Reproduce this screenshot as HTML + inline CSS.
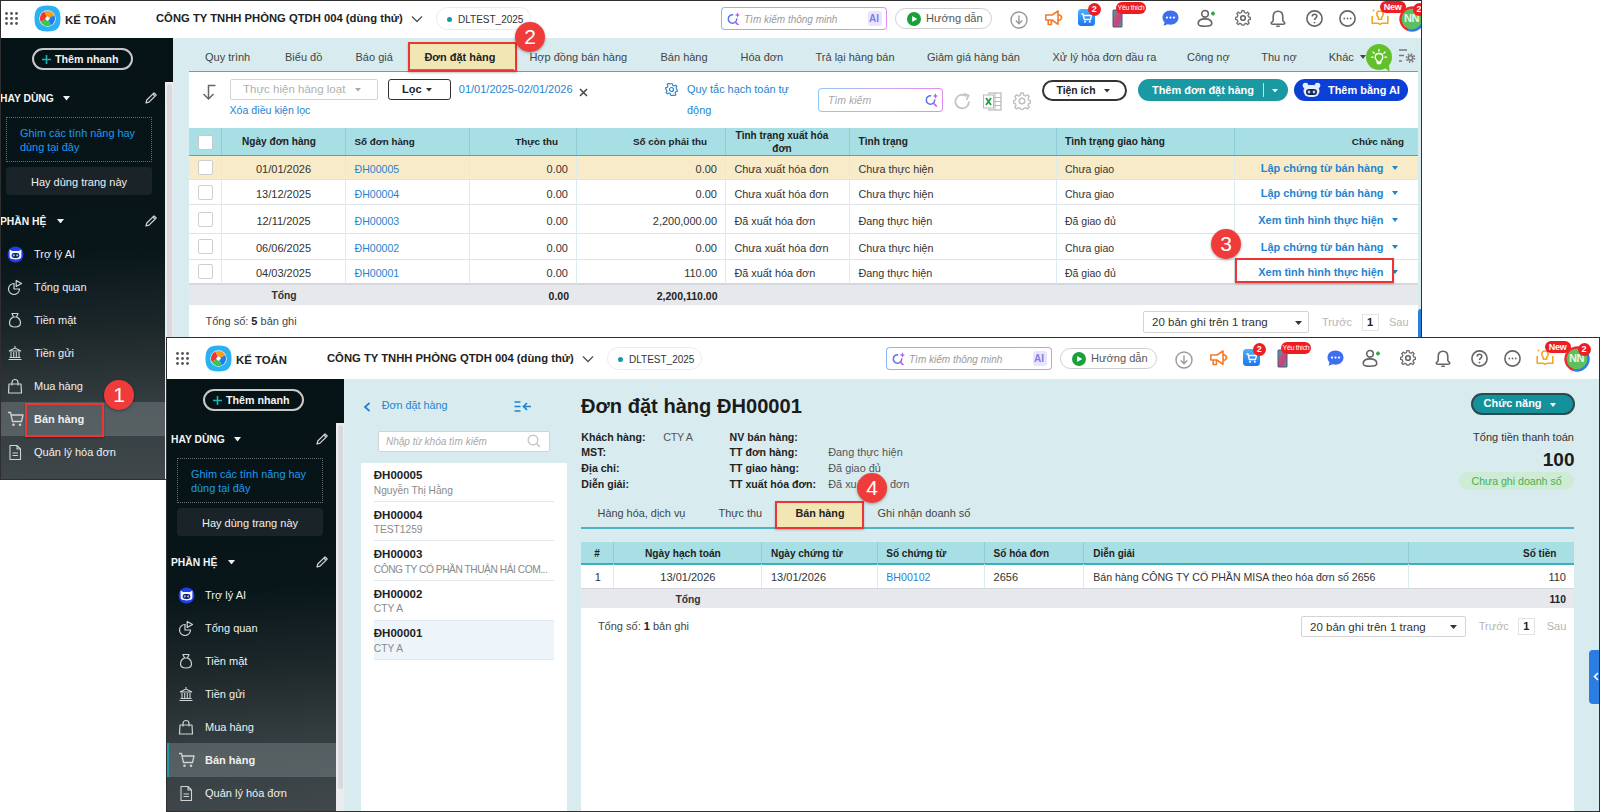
<!DOCTYPE html><html><head><meta charset="utf-8"><style>
html,body{margin:0;padding:0;}
body{width:1600px;height:812px;position:relative;overflow:hidden;background:#fff;font-family:"Liberation Sans",sans-serif;}
.t{position:absolute;white-space:nowrap;}
.r{position:absolute;}
.win{position:absolute;left:0;top:0;width:1600px;height:812px;}
</style></head><body>
<div class="win" style="clip-path:inset(0px 178px 332px 0px);">
<div class="r" style="left:0px;top:0px;width:1422px;height:480px;background:#fff;"></div>
<svg class="r" style="left:5px;top:12px" width="14" height="14" viewBox="0 0 14 14"><circle cx="1.5" cy="1.5" r="1.4" fill="#555"/><circle cx="1.5" cy="6.5" r="1.4" fill="#555"/><circle cx="1.5" cy="11.5" r="1.4" fill="#555"/><circle cx="6.5" cy="1.5" r="1.4" fill="#555"/><circle cx="6.5" cy="6.5" r="1.4" fill="#555"/><circle cx="6.5" cy="11.5" r="1.4" fill="#555"/><circle cx="11.5" cy="1.5" r="1.4" fill="#555"/><circle cx="11.5" cy="6.5" r="1.4" fill="#555"/><circle cx="11.5" cy="11.5" r="1.4" fill="#555"/></svg>
<svg class="r" style="left:34px;top:5px" width="27" height="27" viewBox="0 0 27 27"><path d="M13.5 0.5 C23 0.5 26.5 4 26.5 13.5 C26.5 23 23 26.5 13.5 26.5 C4 26.5 0.5 23 0.5 13.5 C0.5 4 4 0.5 13.5 0.5 Z" fill="#2ab2f0"/><circle cx="13.5" cy="13.5" r="8.3" fill="#e8f7ff"/><path d="M13.5 13.5 L10.29 6.61 A7.6 7.6 0 0 1 20.39 10.29 Z" fill="#ff9a12"/><path d="M13.5 13.5 L20.39 10.29 A7.6 7.6 0 0 1 16.71 20.39 Z" fill="#1f7bf2"/><path d="M13.5 13.5 L16.71 20.39 A7.6 7.6 0 0 1 6.61 16.71 Z" fill="#39c94a"/><path d="M13.5 13.5 L6.61 16.71 A7.6 7.6 0 0 1 10.29 6.61 Z" fill="#f2372f"/><rect x="11.7" y="11.7" width="3.6" height="3.6" fill="#fff" transform="rotate(45 13.5 13.5)"/></svg>
<div class="t" style="left:65px;top:12.00px;font-size:11.4px;line-height:16px;color:#222;font-weight:700;">KẾ TOÁN</div>
<div class="t" style="left:156px;top:10.20px;font-size:11.26px;line-height:16px;color:#222;font-weight:700;">CÔNG TY TNHH PHÒNG QTDH 004 (dùng thử)</div>
<svg class="r" style="left:411px;top:15px" width="12" height="8" viewBox="0 0 12 8"><path d="M1 1.5 L6 6.5 L11 1.5" fill="none" stroke="#555" stroke-width="1.4"/></svg>
<div class="r" style="left:436px;top:7px;width:95px;height:23px;border:1px solid #ececec;border-radius:12px;box-sizing:border-box;"></div>
<div class="r" style="left:447px;top:16.5px;width:5px;height:5px;background:#149aa8;border-radius:50%;"></div>
<div class="t" style="left:458px;top:12.80px;font-size:10px;line-height:14px;color:#333;letter-spacing:0px;">DLTEST_2025</div>
<div class="r" style="left:721px;top:7px;width:166px;height:23px;border-radius:4px;background:linear-gradient(90deg,#8db4f7,#c49af5 60%,#e58cf0);"></div>
<div class="r" style="left:722px;top:8px;width:164px;height:21px;border-radius:3px;background:#fff;"></div>
<svg class="r" style="left:727px;top:12px" width="13" height="13" viewBox="0 0 13 13"><path d="M9.64 6.27 A4.2 4.2 0 1 1 6.23 2.86" fill="none" stroke="#5a73ee" stroke-width="1.5"/><path d="M8.3 10 L11.3 13" stroke="#c05ae8" stroke-width="1.7" stroke-linecap="round"/><path d="M10.5 0.3 L11.3 2.2 L13.2 3 L11.3 3.8 L10.5 5.7 L9.7 3.8 L7.8 3 L9.7 2.2 Z" fill="#b35ae8"/></svg>
<div class="t" style="left:744px;top:13.00px;font-size:10px;line-height:14px;color:#9a9a9a;font-style:italic;">Tìm kiếm thông minh</div>
<div class="r" style="left:868px;top:11px;width:14px;height:15px;border-radius:3px;background:#e9e6fb;"></div>
<div class="t" style="left:869px;top:11.50px;font-size:10px;line-height:14px;color:#7d7cf0;font-weight:700;letter-spacing:0px;">AI</div>
<div class="r" style="left:895px;top:8px;width:97px;height:21px;border:1px solid #cfcfcf;border-radius:11px;box-sizing:border-box;"></div>
<svg class="r" style="left:906.5px;top:11.8px" width="14" height="14" viewBox="0 0 14 14"><circle cx="7" cy="7" r="7" fill="#1aa03a"/><path d="M5.2 4 L10.2 7 L5.2 10 Z" fill="#fff"/></svg>
<div class="t" style="left:926px;top:9.60px;font-size:11.1px;line-height:16px;color:#555;">Hướng dẫn</div>
<svg class="r" style="left:1010px;top:11px" width="18" height="18" viewBox="0 0 18 18"><circle cx="9" cy="9" r="8" fill="none" stroke="#9a9a9a" stroke-width="1.4"/><path d="M9 4.5 L9 12.5 M5.8 9.5 L9 12.7 L12.2 9.5" fill="none" stroke="#9a9a9a" stroke-width="1.4"/></svg>
<svg class="r" style="left:1045px;top:10px" width="18" height="16" viewBox="0 0 18 16"><path d="M0.8 5 L7 5 L13 1 L13 14.3 L7 10 L0.8 10 Z M13 4.5 C15.5 5 16.6 6.3 16.6 7.6 C16.6 9 15.5 10.2 13 10.8 M3.2 10 L3.2 14.5 L6.4 14.5 L6.4 10" fill="none" stroke="#f47b2a" stroke-width="1.6" stroke-linejoin="round"/></svg>
<svg class="r" style="left:1078px;top:8.5px" width="17" height="17" viewBox="0 0 17 17"><defs><linearGradient id="cg" x1="0" y1="0" x2="0" y2="1"><stop offset="0" stop-color="#4fb0fa"/><stop offset="1" stop-color="#1d74ee"/></linearGradient></defs><rect width="17" height="17" rx="3.5" fill="url(#cg)"/><path d="M3.5 5 L5 5 L6.3 10.5 L12.5 10.5 L13.5 6.5 L5.8 6.5" fill="none" stroke="#fff" stroke-width="1.3"/><circle cx="7" cy="12.8" r="1" fill="#fff"/><circle cx="11.8" cy="12.8" r="1" fill="#fff"/></svg>
<div class="r" style="left:1087.5px;top:2.5px;width:13.5px;height:13.5px;border-radius:50%;background:#ee1d24;"></div>
<div class="t" style="left:1087.3px;top:3.00px;font-size:9px;line-height:13px;color:#fff;font-weight:700;width:14px;text-align:center;">2</div>
<svg class="r" style="left:1112px;top:9px" width="11" height="19" viewBox="0 0 11 19"><defs><linearGradient id="pg" x1="0" y1="0" x2="1" y2="1"><stop offset="0" stop-color="#3aa6b0"/><stop offset="0.45" stop-color="#d0457a"/><stop offset="0.7" stop-color="#b84a8a"/><stop offset="1" stop-color="#2fb0a0"/></linearGradient></defs><rect x="0.5" y="0.5" width="10" height="18" rx="1.5" fill="#4b5a6a"/><rect x="1.5" y="1.5" width="8" height="16" rx="1" fill="url(#pg)"/></svg>
<div class="r" style="left:1116px;top:1.5px;width:30px;height:12px;border-radius:6px;background:#ee1d24;"></div>
<div class="t" style="left:1116.0px;top:2.50px;font-size:7px;line-height:10px;color:#fff;letter-spacing:-0.3px;width:30px;text-align:center;">Yêu thích</div>
<svg class="r" style="left:1161.5px;top:10px" width="17" height="16" viewBox="0 0 17 16"><path d="M8.5 0.5 C13.2 0.5 16.5 3.6 16.5 7.6 C16.5 11.6 13.2 14.7 8.5 14.7 C7.5 14.7 6.6 14.6 5.7 14.3 L1.5 15.8 L2.6 12.4 C1.3 11.1 0.5 9.5 0.5 7.6 C0.5 3.6 3.8 0.5 8.5 0.5 Z" fill="#3d6ff0"/><circle cx="5" cy="7.6" r="1.1" fill="#fff"/><circle cx="8.5" cy="7.6" r="1.1" fill="#fff"/><circle cx="12" cy="7.6" r="1.1" fill="#fff"/></svg>
<svg class="r" style="left:1197px;top:9px" width="20" height="19" viewBox="0 0 20 19"><circle cx="8" cy="4.8" r="3.3" fill="none" stroke="#666" stroke-width="1.6"/><path d="M1.2 14.6 C1.2 11.6 4.2 9.9 8 9.9 C11.8 9.9 14.8 11.6 14.8 14.6 C14.8 16.9 12.2 17.3 8 17.3 C3.8 17.3 1.2 16.9 1.2 14.6 Z" fill="none" stroke="#666" stroke-width="1.6"/><path d="M16 2.5 L16 6.5 M14 4.5 L18 4.5" stroke="#28a745" stroke-width="1.8"/></svg>
<svg class="r" style="left:1235px;top:10px" width="16" height="16" viewBox="0 0 16 16"><path d="M8 0.8 L9.6 0.8 L10 3 L11.8 3.8 L13.6 2.5 L14.8 3.7 L13.5 5.6 L14.2 7.3 L16.3 7.8 L16.3 9.4" fill="none"/><circle cx="8" cy="8" r="2.3" fill="none" stroke="#666" stroke-width="1.6"/><path d="M6.9 1 L9.1 1 L9.5 3 L11.2 3.8 L12.9 2.6 L14.4 4.1 L13.2 5.8 L13.9 7.5 L15.7 7.9 L15.7 10.1 L13.9 10.5 L13.2 12.2 L14.4 13.9 L12.9 15.4 L11.2 14.2 L9.5 15 L9.1 16 L6.9 16 L6.5 14.9 L4.8 14.2 L3.1 15.4 L1.6 13.9 L2.8 12.2 L2.1 10.5 L0.4 10.1 L0.4 7.9 L2.1 7.5 L2.8 5.8 L1.6 4.1 L3.1 2.6 L4.8 3.8 L6.5 3 Z" fill="none" stroke="#6b6b6b" stroke-width="1.3" stroke-linejoin="round" transform="scale(0.97) translate(0.2,-0.4)"/></svg>
<svg class="r" style="left:1270px;top:9.5px" width="16" height="18" viewBox="0 0 16 18"><path d="M8 1.2 C4.9 1.2 3.2 3.6 3.2 6.8 L3.2 10.2 C3.2 11.6 1.2 12 1.2 13.3 C1.2 14.1 2 14.3 3 14.3 L13 14.3 C14 14.3 14.8 14.1 14.8 13.3 C14.8 12 12.8 11.6 12.8 10.2 L12.8 6.8 C12.8 3.6 11.1 1.2 8 1.2 Z" fill="none" stroke="#666" stroke-width="1.6"/><path d="M6.8 16.3 L9.2 16.3" stroke="#6b6b6b" stroke-width="1.6" stroke-linecap="round"/></svg>
<svg class="r" style="left:1306px;top:10px" width="17" height="17" viewBox="0 0 17 17"><circle cx="8.5" cy="8.5" r="7.6" fill="none" stroke="#666" stroke-width="1.6"/><path d="M6.2 6.5 C6.2 4.9 7.3 4.2 8.5 4.2 C9.8 4.2 10.8 5 10.8 6.3 C10.8 8 8.5 8.2 8.5 10" fill="none" stroke="#666" stroke-width="1.6"/><circle cx="8.5" cy="12.6" r="0.9" fill="#6b6b6b"/></svg>
<svg class="r" style="left:1339px;top:10px" width="17" height="17" viewBox="0 0 17 17"><circle cx="8.5" cy="8.5" r="7.6" fill="none" stroke="#666" stroke-width="1.6"/><circle cx="5.3" cy="8.5" r="0.9" fill="#6b6b6b"/><circle cx="8.5" cy="8.5" r="0.9" fill="#6b6b6b"/><circle cx="11.7" cy="8.5" r="0.9" fill="#6b6b6b"/></svg>
<svg class="r" style="left:1371px;top:8px" width="18" height="18" viewBox="0 0 18 18"><path d="M1.2 8 L1.2 15.3 L7 15.3 C8 15.3 8.4 16.3 9 16.3 C9.6 16.3 10 15.3 11 15.3 L16.8 15.3 L16.8 8" fill="none" stroke="#f5a524" stroke-width="1.6" stroke-linejoin="round"/><path d="M9 3 C7 3 5.8 4.5 5.8 6.2 C5.8 7.6 6.6 8.5 7.3 9.2 L7.3 11.3 L10.7 11.3 L10.7 9.2 C11.4 8.5 12.2 7.6 12.2 6.2 C12.2 4.5 11 3 9 3 Z" fill="none" stroke="#f5a524" stroke-width="1.6" stroke-linejoin="round"/><circle cx="2.5" cy="2.5" r="0.9" fill="#f5a524"/></svg>
<div class="r" style="left:1380px;top:1px;width:25.5px;height:12px;border-radius:6px;background:#ee1d24;"></div>
<div class="t" style="left:1379.7px;top:0.50px;font-size:9px;line-height:13px;color:#fff;font-weight:700;letter-spacing:-0.2px;width:26px;text-align:center;">New</div>
<svg class="r" style="left:1399px;top:5.5px" width="26" height="26" viewBox="0 0 26 26"><circle cx="13" cy="13" r="11" fill="#5cc15c"/><path d="M9.07 23.81 A11.5 11.5 0 1 1 18.75 3.04" fill="none" stroke="#ee2a2a" stroke-width="2.4"/><path d="M18.75 3.04 A11.5 11.5 0 0 1 9.07 23.81" fill="none" stroke="#2d7be6" stroke-width="2.4"/></svg>
<div class="t" style="left:1398.5px;top:11.30px;font-size:11px;line-height:15px;color:#e9f6e9;font-weight:700;letter-spacing:-0.4px;width:26px;text-align:center;">NN</div>
<div class="r" style="left:1412.5px;top:3px;width:13px;height:13px;border-radius:50%;background:#ee1d24;"></div>
<div class="t" style="left:1412.5px;top:3.00px;font-size:9px;line-height:13px;color:#fff;font-weight:700;width:13px;text-align:center;">2</div>
<div class="r" style="left:173px;top:38px;width:1249px;height:442px;background:#d8ecef;"></div>
<div class="r" style="left:0px;top:38px;width:173px;height:441px;background:linear-gradient(176deg,#061316 0%,#081619 48%,#1a2528 64%,#333c3f 82%,#40484b 100%);"></div>
<div class="r" style="left:165px;top:82px;width:8px;height:397px;background:#ececef;"></div>
<div class="r" style="left:166.5px;top:84px;width:5px;height:373px;background:#d8d8dd;border-radius:3px;"></div>
<div class="r" style="left:32px;top:48px;width:101px;height:22px;border:2px solid #c8c8c8;border-radius:11px;box-sizing:border-box;"></div>
<svg class="r" style="left:42px;top:55px" width="9" height="9" viewBox="0 0 9 9"><path d="M4.5 0 L4.5 9 M0 4.5 L9 4.5" stroke="#19b5b5" stroke-width="1.6"/></svg>
<div class="t" style="left:55px;top:52.00px;font-size:10.7px;line-height:15px;color:#f2f2f2;font-weight:700;">Thêm nhanh</div>
<div class="t" style="left:0px;top:92.00px;font-size:10.3px;line-height:14px;color:#f5f5f5;font-weight:700;">HAY DÙNG</div>
<svg class="r" style="left:63px;top:96px" width="7" height="4.5" viewBox="0 0 7 4.5"><path d="M0 0 L7 0 L3.5 4.5 Z" fill="#f0f0f0"/></svg>
<svg class="r" style="left:143.5px;top:91px" width="14" height="14" viewBox="0 0 14 14"><path d="M2 12 L2.8 9 L10 1.8 L12.2 4 L5 11.2 Z M8.8 3 L11 5.2" fill="none" stroke="#d5d5d5" stroke-width="1.2" stroke-linejoin="round"/></svg>
<div class="r" style="left:6px;top:117px;width:146px;height:45px;border:1px dotted #667073;box-sizing:border-box;"></div>
<div class="t" style="left:20px;top:126.00px;font-size:10.9px;line-height:15px;color:#1a9cf0;">Ghim các tính năng hay</div>
<div class="t" style="left:20px;top:140.00px;font-size:10.9px;line-height:15px;color:#1a9cf0;">dùng tại đây</div>
<div class="r" style="left:6px;top:167px;width:146px;height:28px;background:#1a2428;border-radius:4px;"></div>
<div class="t" style="left:6.0px;top:175.00px;font-size:11px;line-height:15px;color:#f0f0f0;width:146px;text-align:center;">Hay dùng trang này</div>
<div class="t" style="left:0px;top:214.50px;font-size:10.3px;line-height:14px;color:#f5f5f5;font-weight:700;">PHẦN HỆ</div>
<svg class="r" style="left:56.5px;top:218.5px" width="7" height="4.5" viewBox="0 0 7 4.5"><path d="M0 0 L7 0 L3.5 4.5 Z" fill="#f0f0f0"/></svg>
<svg class="r" style="left:143.5px;top:213.5px" width="14" height="14" viewBox="0 0 14 14"><path d="M2 12 L2.8 9 L10 1.8 L12.2 4 L5 11.2 Z M8.8 3 L11 5.2" fill="none" stroke="#d5d5d5" stroke-width="1.2" stroke-linejoin="round"/></svg>
<svg class="r" style="left:6.5px;top:246px" width="17" height="17" viewBox="0 0 17 17"><circle cx="8.5" cy="8.5" r="8" fill="#1d3ff0"/><path d="M2.6 3.6 L5.2 4.9 L11.8 4.9 L14.4 3.6 L14.4 10 C14.4 12.6 12.4 13.4 8.5 13.4 C4.6 13.4 2.6 12.6 2.6 10 Z" fill="#f4f6ff"/><rect x="4.6" y="7" width="7.8" height="5" rx="2.4" fill="#1a1f66"/><circle cx="6.8" cy="9.4" r="1.1" fill="#9bb8dc"/><circle cx="10.2" cy="9.4" r="1.1" fill="#9bb8dc"/></svg>
<div class="t" style="left:34px;top:246.50px;font-size:11px;line-height:15px;color:#f0f0f0;">Trợ lý AI</div>
<svg class="r" style="left:6.5px;top:279px" width="16" height="16" viewBox="0 0 16 16"><path d="M7 4.5 A5.5 5.5 0 1 0 12.5 10 L7 10 Z" fill="none" stroke="#cfd3d4" stroke-width="1.2"/><path d="M9.2 1.5 L9.2 7.5 L14.5 4.5 Z" fill="none" stroke="#cfd3d4" stroke-width="1.2" stroke-linejoin="round"/></svg>
<div class="t" style="left:34px;top:279.50px;font-size:11px;line-height:15px;color:#f0f0f0;">Tổng quan</div>
<svg class="r" style="left:6.5px;top:312px" width="16" height="16" viewBox="0 0 16 16"><path d="M5 1.5 L11 1.5 L9.5 5 C13 6.5 13.5 9 13.5 11 C13.5 14 11 15 8 15 C5 15 2.5 14 2.5 11 C2.5 9 3 6.5 6.5 5 Z M6 5 L10 5" fill="none" stroke="#cfd3d4" stroke-width="1.2" stroke-linejoin="round"/></svg>
<div class="t" style="left:34px;top:312.50px;font-size:11px;line-height:15px;color:#f0f0f0;">Tiền mặt</div>
<svg class="r" style="left:6.5px;top:345px" width="16" height="16" viewBox="0 0 16 16"><path d="M8 1 L8 3 M2 6 L14 6 L8 3 Z M1.5 14.5 L14.5 14.5 M2.5 12.5 L13.5 12.5 M4 7 L4 12 M6.7 7 L6.7 12 M9.3 7 L9.3 12 M12 7 L12 12" fill="none" stroke="#cfd3d4" stroke-width="1.1"/></svg>
<div class="t" style="left:34px;top:345.50px;font-size:11px;line-height:15px;color:#f0f0f0;">Tiền gửi</div>
<svg class="r" style="left:6.5px;top:378px" width="16" height="16" viewBox="0 0 16 16"><path d="M2 6 L14 6 L14.5 15 L1.5 15 Z M5 7.5 L5 4.5 A3 3 0 0 1 11 4.5 L11 7.5" fill="none" stroke="#cfd3d4" stroke-width="1.2" stroke-linejoin="round"/></svg>
<div class="t" style="left:34px;top:378.50px;font-size:11px;line-height:15px;color:#f0f0f0;">Mua hàng</div>
<div class="r" style="left:0px;top:402px;width:165px;height:34px;background:rgba(200,210,215,0.22);"></div>
<svg class="r" style="left:6.5px;top:411px" width="17" height="16" viewBox="0 0 17 16"><path d="M1 1.5 L3.5 1.5 L5.5 10.5 L14.5 10.5 L16 4 L4.3 4" fill="none" stroke="#cfd3d4" stroke-width="1.3" stroke-linejoin="round"/><circle cx="6.5" cy="13.8" r="1.3" fill="#cfd3d4"/><circle cx="13" cy="13.8" r="1.3" fill="#cfd3d4"/></svg>
<div class="t" style="left:34px;top:411.50px;font-size:11px;line-height:15px;color:#f0f0f0;font-weight:700;">Bán hàng</div>
<svg class="r" style="left:6.5px;top:444px" width="16" height="17" viewBox="0 0 16 17"><path d="M3 1.5 L10 1.5 L13.5 5 L13.5 15.5 L3 15.5 Z M10 1.5 L10 5 L13.5 5 M5.5 9 L11 9 M5.5 11.5 L11 11.5" fill="none" stroke="#cfd3d4" stroke-width="1.1" stroke-linejoin="round"/></svg>
<div class="t" style="left:34px;top:444.50px;font-size:11px;line-height:15px;color:#f0f0f0;">Quản lý hóa đơn</div>
<div class="r" style="left:407.5px;top:43px;width:109px;height:28px;background:#f3e6b5;"></div>
<div class="r" style="left:410px;top:69px;width:104px;height:2px;background:#23a6b3;"></div>
<div class="t" style="left:205px;top:49.50px;font-size:11px;line-height:15px;color:#444;">Quy trình</div>
<div class="t" style="left:285px;top:49.50px;font-size:11px;line-height:15px;color:#444;">Biểu đồ</div>
<div class="t" style="left:355.5px;top:49.50px;font-size:11px;line-height:15px;color:#444;">Báo giá</div>
<div class="t" style="left:424.4px;top:49.50px;font-size:10.94px;line-height:15px;color:#222;font-weight:700;">Đơn đặt hàng</div>
<div class="t" style="left:529.4px;top:49.50px;font-size:11px;line-height:15px;color:#444;">Hợp đồng bán hàng</div>
<div class="t" style="left:660.5px;top:49.50px;font-size:11px;line-height:15px;color:#444;">Bán hàng</div>
<div class="t" style="left:740.5px;top:49.50px;font-size:11px;line-height:15px;color:#444;">Hóa đơn</div>
<div class="t" style="left:815.5px;top:49.50px;font-size:11px;line-height:15px;color:#444;">Trả lại hàng bán</div>
<div class="t" style="left:927px;top:49.50px;font-size:11px;line-height:15px;color:#444;">Giảm giá hàng bán</div>
<div class="t" style="left:1052.5px;top:49.50px;font-size:11px;line-height:15px;color:#444;">Xử lý hóa đơn đầu ra</div>
<div class="t" style="left:1187px;top:49.50px;font-size:11px;line-height:15px;color:#444;">Công nợ</div>
<div class="t" style="left:1261.25px;top:49.50px;font-size:11px;line-height:15px;color:#444;">Thu nợ</div>
<div class="t" style="left:1328.75px;top:49.50px;font-size:11px;line-height:15px;color:#444;">Khác</div>
<svg class="r" style="left:1360px;top:55px" width="6" height="4" viewBox="0 0 6 4"><path d="M0 0 L6 0 L3.0 4 Z" fill="#444"/></svg>
<div class="r" style="left:1366px;top:44px;width:26px;height:26px;background:#62c02c;border-radius:50%;"></div>
<svg class="r" style="left:1381px;top:64px" width="9" height="9" viewBox="0 0 9 9"><path d="M0 0 L8 0 L8.5 8 Z" fill="#62c02c"/></svg>
<svg class="r" style="left:1370px;top:48px" width="18" height="20" viewBox="0 0 18 20"><path d="M9 5.5 C6.6 5.5 5.2 7.2 5.2 9.2 C5.2 10.8 6.2 11.8 7 12.6 L7 14 L11 14 L11 12.6 C11.8 11.8 12.8 10.8 12.8 9.2 C12.8 7.2 11.4 5.5 9 5.5 Z M7.5 15.5 L10.5 15.5 M9 1.5 L9 3.2 M3 4 L4.2 5.2 M15 4 L13.8 5.2 M1.5 9.2 L3.2 9.2 M16.5 9.2 L14.8 9.2" fill="none" stroke="#fff" stroke-width="1.3" stroke-linecap="round"/></svg>
<svg class="r" style="left:1398px;top:48px" width="18" height="16" viewBox="0 0 18 16"><path d="M1 2 L9 2 M1 7.5 L6 7.5 M1 13 L4 13" stroke="#777" stroke-width="1.3"/><circle cx="12.5" cy="10" r="2.2" fill="none" stroke="#777" stroke-width="1.6"/><circle cx="12.5" cy="10" r="4" fill="none" stroke="#777" stroke-width="1.6" stroke-dasharray="1.6 1.5"/></svg>
<div class="r" style="left:189px;top:70.5px;width:1229px;height:1.3px;background:#3fb3c0;"></div>
<div class="r" style="left:189px;top:72px;width:1229px;height:270px;background:#fff;"></div>
<div class="r" style="left:1418px;top:38px;width:3px;height:442px;background:#d8ecef;"></div>
<svg class="r" style="left:201px;top:84px" width="16" height="17" viewBox="0 0 16 17"><path d="M14.5 1.5 L7.5 1.5 L7.5 15 M2.5 10 L7.5 15 L12.5 10" fill="none" stroke="#666" stroke-width="1.5"/></svg>
<div class="r" style="left:229.5px;top:79px;width:148px;height:20.5px;border:1px solid #d4d4d4;border-radius:2px;box-sizing:border-box;"></div>
<div class="t" style="left:243px;top:81.30px;font-size:11.5px;line-height:16px;color:#b0b0b0;letter-spacing:0px;">Thực hiện hàng loạt</div>
<svg class="r" style="left:355px;top:88px" width="6" height="3.5" viewBox="0 0 6 3.5"><path d="M0 0 L6 0 L3.0 3.5 Z" fill="#aaa"/></svg>
<div class="t" style="left:229.5px;top:102.80px;font-size:10.64px;line-height:15px;color:#1f84d0;">Xóa điều kiện lọc</div>
<div class="r" style="left:388px;top:79px;width:62.5px;height:20.5px;border:1px solid #333;border-radius:3px;box-sizing:border-box;"></div>
<div class="t" style="left:402px;top:81.80px;font-size:11px;line-height:15px;color:#222;font-weight:700;">Lọc</div>
<svg class="r" style="left:426px;top:88px" width="6" height="3.5" viewBox="0 0 6 3.5"><path d="M0 0 L6 0 L3.0 3.5 Z" fill="#333"/></svg>
<div class="t" style="left:458.8px;top:81.80px;font-size:11px;line-height:15px;color:#1f84d0;">01/01/2025-02/01/2026</div>
<svg class="r" style="left:579px;top:88px" width="9" height="9" viewBox="0 0 9 9"><path d="M1 1 L8 8 M8 1 L1 8" stroke="#444" stroke-width="1.5"/></svg>
<svg class="r" style="left:665px;top:83px" width="13" height="13" viewBox="0 0 13 13"><circle cx="6.5" cy="6.5" r="2" fill="none" stroke="#1f84d0" stroke-width="1.2"/><path d="M5.6 0.8 L7.4 0.8 L7.8 2.4 L9.2 3 L10.6 2.1 L11.9 3.4 L11 4.8 L11.6 6.2 L12.2 6.6 L12.2 8.4 L10.6 8.8 L10 10.2 L10.9 11.6 L9.6 12.9 L8.2 12 L6.8 12.6 L6.5 12.2 L5.6 12.2 L5.2 10.6 L3.8 10 L2.4 10.9 L1.1 9.6 L2 8.2 L1.4 6.8 L0.8 6.4 L0.8 4.6 L2.4 4.2 L3 2.8 L2.1 1.4 L3.4 0.1 L4.8 1 Z" fill="none" stroke="#1f84d0" stroke-width="1.1" stroke-linejoin="round"/></svg>
<div class="t" style="left:687px;top:82.30px;font-size:10.92px;line-height:15px;color:#1f84d0;">Quy tắc hạch toán tự</div>
<div class="t" style="left:687px;top:103.30px;font-size:10.92px;line-height:15px;color:#1f84d0;">động</div>
<div class="r" style="left:817.5px;top:88.3px;width:125px;height:23.5px;border-radius:4px;background:linear-gradient(90deg,#8fc7f5,#c9a4f3 60%,#e48af0);"></div>
<div class="r" style="left:818.5px;top:89.3px;width:123px;height:21.5px;border-radius:3px;background:#fff;"></div>
<div class="t" style="left:828px;top:92.50px;font-size:10.5px;line-height:15px;color:#a8a8a8;font-style:italic;">Tìm kiếm</div>
<svg class="r" style="left:924.5px;top:93px" width="13" height="14" viewBox="0 0 13 14"><path d="M9.64 6.27 A4.2 4.2 0 1 1 6.23 2.86" fill="none" stroke="#5a73ee" stroke-width="1.5"/><path d="M8.3 10 L11.3 13" stroke="#c05ae8" stroke-width="1.7" stroke-linecap="round"/><path d="M10.5 0.3 L11.3 2.2 L13.2 3 L11.3 3.8 L10.5 5.7 L9.7 3.8 L7.8 3 L9.7 2.2 Z" fill="#b35ae8"/></svg>
<svg class="r" style="left:953px;top:91.5px" width="19" height="19" viewBox="0 0 19 19"><path d="M16 9.5 A6.8 6.8 0 1 1 13.5 4.3" fill="none" stroke="#c4c4c4" stroke-width="1.8"/><path d="M11 1.5 L15.5 3.5 L13.5 8" fill="none" stroke="#c4c4c4" stroke-width="1.8"/></svg>
<svg class="r" style="left:982.5px;top:91.5px" width="19" height="19" viewBox="0 0 19 19"><rect x="6" y="1" width="12" height="17" fill="none" stroke="#b8b8b8" stroke-width="1.2"/><path d="M6 5.5 L18 5.5 M6 9.5 L18 9.5 M6 13.5 L18 13.5 M12 1 L12 18" stroke="#b8b8b8" stroke-width="1"/><rect x="0.5" y="3" width="10" height="13" fill="#fff" stroke="#b8b8b8" stroke-width="1"/><path d="M3 6 L8 13 M8 6 L3 13" stroke="#1f9d4a" stroke-width="1.8"/></svg>
<svg class="r" style="left:1012.5px;top:91.5px" width="18" height="18" viewBox="0 0 18 18"><circle cx="9" cy="9" r="2.8" fill="none" stroke="#c0c0c0" stroke-width="1.5"/><path d="M7.8 1 L10.2 1 L10.7 3.1 L12.6 4 L14.5 2.8 L16.2 4.5 L15 6.4 L15.8 8.3 L17.5 8.7 L17.5 11 L15.8 11.4 L15 13.3 L16.2 15.2 L14.5 16.9 L12.6 15.7 L10.7 16.5 L10.2 17.5 L7.8 17.5 L7.3 16.5 L5.4 15.7 L3.5 16.9 L1.8 15.2 L3 13.3 L2.2 11.4 L0.5 11 L0.5 8.7 L2.2 8.3 L3 6.4 L1.8 4.5 L3.5 2.8 L5.4 4 L7.3 3.1 Z" fill="none" stroke="#c0c0c0" stroke-width="1.4" stroke-linejoin="round"/></svg>
<div class="r" style="left:1042px;top:79.5px;width:85px;height:21.5px;border:2px solid #333;border-radius:11px;box-sizing:border-box;"></div>
<div class="t" style="left:1056.5px;top:82.50px;font-size:10.37px;line-height:15px;color:#222;font-weight:700;">Tiện ích</div>
<svg class="r" style="left:1104px;top:89px" width="6" height="3.5" viewBox="0 0 6 3.5"><path d="M0 0 L6 0 L3.0 3.5 Z" fill="#333"/></svg>
<div class="r" style="left:1137.5px;top:79px;width:150.5px;height:22px;background:#1a99a3;border-radius:11px;"></div>
<div class="t" style="left:1152px;top:82.50px;font-size:10.94px;line-height:15px;color:#fff;font-weight:700;">Thêm đơn đặt hàng</div>
<div class="r" style="left:1262.5px;top:83px;width:1px;height:14px;background:#bde3e6;"></div>
<svg class="r" style="left:1272px;top:88.5px" width="6" height="3.5" viewBox="0 0 6 3.5"><path d="M0 0 L6 0 L3.0 3.5 Z" fill="#fff"/></svg>
<div class="r" style="left:1293.5px;top:79px;width:114.5px;height:22px;background:#0b3fd6;border-radius:11px;"></div>
<svg class="r" style="left:1302px;top:82px" width="19" height="16" viewBox="0 0 19 16"><circle cx="3.5" cy="3.5" r="2.8" fill="#e8eefc"/><circle cx="15.5" cy="3.5" r="2.8" fill="#e8eefc"/><rect x="1.5" y="3" width="16" height="12" rx="6" fill="#e8eefc"/><rect x="4" y="7" width="11" height="6" rx="3" fill="#1b2450"/><circle cx="7" cy="10" r="1.4" fill="#9fd3ff"/><circle cx="12" cy="10" r="1.4" fill="#9fd3ff"/></svg>
<div class="t" style="left:1328px;top:82.50px;font-size:10.95px;line-height:15px;color:#fff;font-weight:700;">Thêm bằng AI</div>
<div class="r" style="left:189px;top:128px;width:1229px;height:27px;background:#a7dfe4;"></div>
<div class="r" style="left:189px;top:154.5px;width:1229px;height:1.8px;background:#3ab0be;"></div>
<div class="r" style="left:189px;top:155.5px;width:1229px;height:24.5px;background:#f8ebc9;"></div>
<div class="r" style="left:189px;top:179px;width:1229px;height:1px;background:#dfe3e6;"></div>
<div class="r" style="left:189px;top:204px;width:1229px;height:1px;background:#dfe3e6;"></div>
<div class="r" style="left:189px;top:233px;width:1229px;height:1px;background:#dfe3e6;"></div>
<div class="r" style="left:189px;top:258.5px;width:1229px;height:1px;background:#dfe3e6;"></div>
<div class="r" style="left:189px;top:283px;width:1229px;height:1px;background:#dfe3e6;"></div>
<div class="r" style="left:189px;top:283px;width:1229px;height:2px;background:#d4d7db;"></div>
<div class="r" style="left:189px;top:285px;width:1229px;height:19.5px;background:#e6e8ec;"></div>
<div class="r" style="left:221px;top:128px;width:1px;height:26.5px;background:#93cdd3;"></div>
<div class="r" style="left:221px;top:155.5px;width:1px;height:128px;background:#dcebee;"></div>
<div class="r" style="left:345px;top:128px;width:1px;height:26.5px;background:#93cdd3;"></div>
<div class="r" style="left:345px;top:155.5px;width:1px;height:128px;background:#dcebee;"></div>
<div class="r" style="left:469px;top:128px;width:1px;height:26.5px;background:#93cdd3;"></div>
<div class="r" style="left:469px;top:155.5px;width:1px;height:128px;background:#dcebee;"></div>
<div class="r" style="left:576px;top:128px;width:1px;height:26.5px;background:#93cdd3;"></div>
<div class="r" style="left:576px;top:155.5px;width:1px;height:128px;background:#dcebee;"></div>
<div class="r" style="left:725px;top:128px;width:1px;height:26.5px;background:#93cdd3;"></div>
<div class="r" style="left:725px;top:155.5px;width:1px;height:128px;background:#dcebee;"></div>
<div class="r" style="left:849px;top:128px;width:1px;height:26.5px;background:#93cdd3;"></div>
<div class="r" style="left:849px;top:155.5px;width:1px;height:128px;background:#dcebee;"></div>
<div class="r" style="left:1056px;top:128px;width:1px;height:26.5px;background:#93cdd3;"></div>
<div class="r" style="left:1056px;top:155.5px;width:1px;height:128px;background:#dcebee;"></div>
<div class="r" style="left:1234px;top:128px;width:1px;height:26.5px;background:#93cdd3;"></div>
<div class="r" style="left:1234px;top:155.5px;width:1px;height:128px;background:#dcebee;"></div>
<div class="r" style="left:197.5px;top:134.5px;width:15px;height:15px;background:#fff;border:1px solid #c8c8c8;border-radius:2px;box-sizing:border-box;"></div>
<div class="t" style="left:242px;top:135.30px;font-size:10.1px;line-height:14px;color:#222;font-weight:700;">Ngày đơn hàng</div>
<div class="t" style="left:354.5px;top:135.30px;font-size:9.8px;line-height:14px;color:#222;font-weight:700;">Số đơn hàng</div>
<div class="t" style="left:258px;top:135.30px;font-size:9.9px;line-height:14px;color:#222;font-weight:700;width:300px;text-align:right;">Thực thu</div>
<div class="t" style="left:407px;top:135.30px;font-size:9.9px;line-height:14px;color:#222;font-weight:700;width:300px;text-align:right;">Số còn phải thu</div>
<div class="t" style="left:722.0px;top:128.50px;font-size:10px;line-height:14px;color:#222;font-weight:700;width:120px;text-align:center;">Tình trạng xuất hóa</div>
<div class="t" style="left:722.0px;top:141.50px;font-size:10px;line-height:14px;color:#222;font-weight:700;width:120px;text-align:center;">đơn</div>
<div class="t" style="left:858.5px;top:135.30px;font-size:10.1px;line-height:14px;color:#222;font-weight:700;">Tình trạng</div>
<div class="t" style="left:1065px;top:135.30px;font-size:10.1px;line-height:14px;color:#222;font-weight:700;">Tình trạng giao hàng</div>
<div class="t" style="left:1104px;top:135.30px;font-size:9.9px;line-height:14px;color:#222;font-weight:700;width:300px;text-align:right;">Chức năng</div>
<div class="r" style="left:197.5px;top:160.25px;width:15px;height:15px;background:#fff;border:1px solid #cfcfcf;border-radius:2px;box-sizing:border-box;"></div>
<div class="t" style="left:221.5px;top:161.75px;font-size:11px;line-height:15px;color:#333;width:124px;text-align:center;">01/01/2026</div>
<div class="t" style="left:354.5px;top:161.75px;font-size:10.6px;line-height:15px;color:#1f84d0;">ĐH00005</div>
<div class="t" style="left:268px;top:161.75px;font-size:11px;line-height:15px;color:#333;width:300px;text-align:right;">0.00</div>
<div class="t" style="left:417px;top:161.75px;font-size:11px;line-height:15px;color:#333;width:300px;text-align:right;">0.00</div>
<div class="t" style="left:734.5px;top:161.75px;font-size:10.85px;line-height:15px;color:#333;">Chưa xuất hóa đơn</div>
<div class="t" style="left:858.5px;top:161.75px;font-size:10.8px;line-height:15px;color:#333;">Chưa thực hiện</div>
<div class="t" style="left:1065px;top:161.75px;font-size:10.5px;line-height:15px;color:#333;">Chưa giao</div>
<div class="t" style="left:1083.5px;top:160.75px;font-size:10.95px;line-height:15px;color:#1f84d0;font-weight:700;width:300px;text-align:right;">Lập chứng từ bán hàng</div>
<svg class="r" style="left:1392px;top:166.25px" width="6" height="4" viewBox="0 0 6 4"><path d="M0 0 L6 0 L3.0 4 Z" fill="#1f84d0"/></svg>
<div class="r" style="left:197.5px;top:185.0px;width:15px;height:15px;background:#fff;border:1px solid #cfcfcf;border-radius:2px;box-sizing:border-box;"></div>
<div class="t" style="left:221.5px;top:186.50px;font-size:11px;line-height:15px;color:#333;width:124px;text-align:center;">13/12/2025</div>
<div class="t" style="left:354.5px;top:186.50px;font-size:10.6px;line-height:15px;color:#1f84d0;">ĐH00004</div>
<div class="t" style="left:268px;top:186.50px;font-size:11px;line-height:15px;color:#333;width:300px;text-align:right;">0.00</div>
<div class="t" style="left:417px;top:186.50px;font-size:11px;line-height:15px;color:#333;width:300px;text-align:right;">0.00</div>
<div class="t" style="left:734.5px;top:186.50px;font-size:10.85px;line-height:15px;color:#333;">Chưa xuất hóa đơn</div>
<div class="t" style="left:858.5px;top:186.50px;font-size:10.8px;line-height:15px;color:#333;">Chưa thực hiện</div>
<div class="t" style="left:1065px;top:186.50px;font-size:10.5px;line-height:15px;color:#333;">Chưa giao</div>
<div class="t" style="left:1083.5px;top:185.50px;font-size:10.95px;line-height:15px;color:#1f84d0;font-weight:700;width:300px;text-align:right;">Lập chứng từ bán hàng</div>
<svg class="r" style="left:1392px;top:191.0px" width="6" height="4" viewBox="0 0 6 4"><path d="M0 0 L6 0 L3.0 4 Z" fill="#1f84d0"/></svg>
<div class="r" style="left:197.5px;top:212.0px;width:15px;height:15px;background:#fff;border:1px solid #cfcfcf;border-radius:2px;box-sizing:border-box;"></div>
<div class="t" style="left:221.5px;top:213.50px;font-size:11px;line-height:15px;color:#333;width:124px;text-align:center;">12/11/2025</div>
<div class="t" style="left:354.5px;top:213.50px;font-size:10.6px;line-height:15px;color:#1f84d0;">ĐH00003</div>
<div class="t" style="left:268px;top:213.50px;font-size:11px;line-height:15px;color:#333;width:300px;text-align:right;">0.00</div>
<div class="t" style="left:417px;top:213.50px;font-size:11px;line-height:15px;color:#333;width:300px;text-align:right;">2,200,000.00</div>
<div class="t" style="left:734.5px;top:213.50px;font-size:10.85px;line-height:15px;color:#333;">Đã xuất hóa đơn</div>
<div class="t" style="left:858.5px;top:213.50px;font-size:10.8px;line-height:15px;color:#333;">Đang thực hiện</div>
<div class="t" style="left:1065px;top:213.50px;font-size:10.5px;line-height:15px;color:#333;">Đã giao đủ</div>
<div class="t" style="left:1083.5px;top:212.50px;font-size:10.95px;line-height:15px;color:#1f84d0;font-weight:700;width:300px;text-align:right;">Xem tình hình thực hiện</div>
<svg class="r" style="left:1392px;top:218.0px" width="6" height="4" viewBox="0 0 6 4"><path d="M0 0 L6 0 L3.0 4 Z" fill="#1f84d0"/></svg>
<div class="r" style="left:197.5px;top:239.25px;width:15px;height:15px;background:#fff;border:1px solid #cfcfcf;border-radius:2px;box-sizing:border-box;"></div>
<div class="t" style="left:221.5px;top:240.75px;font-size:11px;line-height:15px;color:#333;width:124px;text-align:center;">06/06/2025</div>
<div class="t" style="left:354.5px;top:240.75px;font-size:10.6px;line-height:15px;color:#1f84d0;">ĐH00002</div>
<div class="t" style="left:268px;top:240.75px;font-size:11px;line-height:15px;color:#333;width:300px;text-align:right;">0.00</div>
<div class="t" style="left:417px;top:240.75px;font-size:11px;line-height:15px;color:#333;width:300px;text-align:right;">0.00</div>
<div class="t" style="left:734.5px;top:240.75px;font-size:10.85px;line-height:15px;color:#333;">Chưa xuất hóa đơn</div>
<div class="t" style="left:858.5px;top:240.75px;font-size:10.8px;line-height:15px;color:#333;">Chưa thực hiện</div>
<div class="t" style="left:1065px;top:240.75px;font-size:10.5px;line-height:15px;color:#333;">Chưa giao</div>
<div class="t" style="left:1083.5px;top:239.75px;font-size:10.95px;line-height:15px;color:#1f84d0;font-weight:700;width:300px;text-align:right;">Lập chứng từ bán hàng</div>
<svg class="r" style="left:1392px;top:245.25px" width="6" height="4" viewBox="0 0 6 4"><path d="M0 0 L6 0 L3.0 4 Z" fill="#1f84d0"/></svg>
<div class="r" style="left:197.5px;top:264.25px;width:15px;height:15px;background:#fff;border:1px solid #cfcfcf;border-radius:2px;box-sizing:border-box;"></div>
<div class="t" style="left:221.5px;top:265.75px;font-size:11px;line-height:15px;color:#333;width:124px;text-align:center;">04/03/2025</div>
<div class="t" style="left:354.5px;top:265.75px;font-size:10.6px;line-height:15px;color:#1f84d0;">ĐH00001</div>
<div class="t" style="left:268px;top:265.75px;font-size:11px;line-height:15px;color:#333;width:300px;text-align:right;">0.00</div>
<div class="t" style="left:417px;top:265.75px;font-size:11px;line-height:15px;color:#333;width:300px;text-align:right;">110.00</div>
<div class="t" style="left:734.5px;top:265.75px;font-size:10.85px;line-height:15px;color:#333;">Đã xuất hóa đơn</div>
<div class="t" style="left:858.5px;top:265.75px;font-size:10.8px;line-height:15px;color:#333;">Đang thực hiện</div>
<div class="t" style="left:1065px;top:265.75px;font-size:10.5px;line-height:15px;color:#333;">Đã giao đủ</div>
<div class="t" style="left:1083.5px;top:264.75px;font-size:10.95px;line-height:15px;color:#1f84d0;font-weight:700;width:300px;text-align:right;">Xem tình hình thực hiện</div>
<svg class="r" style="left:1392px;top:270.25px" width="6" height="4" viewBox="0 0 6 4"><path d="M0 0 L6 0 L3.0 4 Z" fill="#1f84d0"/></svg>
<div class="t" style="left:222.0px;top:289.00px;font-size:10.3px;line-height:14px;color:#333;font-weight:700;width:124px;text-align:center;">Tổng</div>
<div class="t" style="left:269px;top:288.50px;font-size:10.5px;line-height:15px;color:#222;font-weight:700;width:300px;text-align:right;">0.00</div>
<div class="t" style="left:417.5px;top:288.50px;font-size:10.5px;line-height:15px;color:#222;font-weight:700;width:300px;text-align:right;">2,200,110.00</div>
<div class="t" style="left:205.5px;top:314.3px;font-size:11px;line-height:15px;color:#444;">Tổng số: <b style="color:#222">5</b> bản ghi</div>
<div class="r" style="left:1143px;top:311px;width:166px;height:22px;border:1px solid #d4d4d4;border-radius:2px;box-sizing:border-box;"></div>
<div class="t" style="left:1152px;top:314.00px;font-size:11.5px;line-height:16px;color:#333;">20 bản ghi trên 1 trang</div>
<svg class="r" style="left:1295px;top:320.5px" width="7" height="4" viewBox="0 0 7 4"><path d="M0 0 L7 0 L3.5 4 Z" fill="#333"/></svg>
<div class="t" style="left:1322px;top:314.50px;font-size:11px;line-height:15px;color:#b5b5b5;">Trước</div>
<div class="r" style="left:1361.5px;top:313.5px;width:17px;height:17px;border:1px solid #e3e3e3;box-sizing:border-box;"></div>
<div class="t" style="left:1361.5px;top:314.50px;font-size:11px;line-height:15px;color:#222;font-weight:700;width:17px;text-align:center;">1</div>
<div class="t" style="left:1389px;top:314.50px;font-size:11px;line-height:15px;color:#b5b5b5;">Sau</div>
<div class="r" style="left:1418px;top:309px;width:3.5px;height:30px;background:#2a7de1;border-radius:3px 0 0 3px;"></div>
<div class="r" style="left:0px;top:0px;width:1422px;height:480px;border:1px solid #2f2f2f;box-sizing:border-box;"></div>
</div>
<div class="win" style="clip-path:inset(337px 0px 0px 166px);">
<div class="r" style="left:166px;top:337px;width:1434px;height:475px;background:#fff;"></div>
<svg class="r" style="left:176px;top:352px" width="14" height="14" viewBox="0 0 14 14"><circle cx="1.5" cy="1.5" r="1.4" fill="#555"/><circle cx="1.5" cy="6.5" r="1.4" fill="#555"/><circle cx="1.5" cy="11.5" r="1.4" fill="#555"/><circle cx="6.5" cy="1.5" r="1.4" fill="#555"/><circle cx="6.5" cy="6.5" r="1.4" fill="#555"/><circle cx="6.5" cy="11.5" r="1.4" fill="#555"/><circle cx="11.5" cy="1.5" r="1.4" fill="#555"/><circle cx="11.5" cy="6.5" r="1.4" fill="#555"/><circle cx="11.5" cy="11.5" r="1.4" fill="#555"/></svg>
<svg class="r" style="left:205px;top:345px" width="27" height="27" viewBox="0 0 27 27"><path d="M13.5 0.5 C23 0.5 26.5 4 26.5 13.5 C26.5 23 23 26.5 13.5 26.5 C4 26.5 0.5 23 0.5 13.5 C0.5 4 4 0.5 13.5 0.5 Z" fill="#2ab2f0"/><circle cx="13.5" cy="13.5" r="8.3" fill="#e8f7ff"/><path d="M13.5 13.5 L10.29 6.61 A7.6 7.6 0 0 1 20.39 10.29 Z" fill="#ff9a12"/><path d="M13.5 13.5 L20.39 10.29 A7.6 7.6 0 0 1 16.71 20.39 Z" fill="#1f7bf2"/><path d="M13.5 13.5 L16.71 20.39 A7.6 7.6 0 0 1 6.61 16.71 Z" fill="#39c94a"/><path d="M13.5 13.5 L6.61 16.71 A7.6 7.6 0 0 1 10.29 6.61 Z" fill="#f2372f"/><rect x="11.7" y="11.7" width="3.6" height="3.6" fill="#fff" transform="rotate(45 13.5 13.5)"/></svg>
<div class="t" style="left:236px;top:352.00px;font-size:11.4px;line-height:16px;color:#222;font-weight:700;">KẾ TOÁN</div>
<div class="t" style="left:327px;top:350.20px;font-size:11.26px;line-height:16px;color:#222;font-weight:700;">CÔNG TY TNHH PHÒNG QTDH 004 (dùng thử)</div>
<svg class="r" style="left:582px;top:355px" width="12" height="8" viewBox="0 0 12 8"><path d="M1 1.5 L6 6.5 L11 1.5" fill="none" stroke="#555" stroke-width="1.4"/></svg>
<div class="r" style="left:607px;top:347px;width:95px;height:23px;border:1px solid #ececec;border-radius:12px;box-sizing:border-box;"></div>
<div class="r" style="left:618px;top:356.5px;width:5px;height:5px;background:#149aa8;border-radius:50%;"></div>
<div class="t" style="left:629px;top:352.80px;font-size:10px;line-height:14px;color:#333;letter-spacing:0px;">DLTEST_2025</div>
<div class="r" style="left:886px;top:347px;width:166px;height:23px;border-radius:4px;background:linear-gradient(90deg,#8db4f7,#c49af5 60%,#e58cf0);"></div>
<div class="r" style="left:887px;top:348px;width:164px;height:21px;border-radius:3px;background:#fff;"></div>
<svg class="r" style="left:892px;top:352px" width="13" height="13" viewBox="0 0 13 13"><path d="M9.64 6.27 A4.2 4.2 0 1 1 6.23 2.86" fill="none" stroke="#5a73ee" stroke-width="1.5"/><path d="M8.3 10 L11.3 13" stroke="#c05ae8" stroke-width="1.7" stroke-linecap="round"/><path d="M10.5 0.3 L11.3 2.2 L13.2 3 L11.3 3.8 L10.5 5.7 L9.7 3.8 L7.8 3 L9.7 2.2 Z" fill="#b35ae8"/></svg>
<div class="t" style="left:909px;top:353.00px;font-size:10px;line-height:14px;color:#9a9a9a;font-style:italic;">Tìm kiếm thông minh</div>
<div class="r" style="left:1033px;top:351px;width:14px;height:15px;border-radius:3px;background:#e9e6fb;"></div>
<div class="t" style="left:1034px;top:351.50px;font-size:10px;line-height:14px;color:#7d7cf0;font-weight:700;letter-spacing:0px;">AI</div>
<div class="r" style="left:1060px;top:348px;width:97px;height:21px;border:1px solid #cfcfcf;border-radius:11px;box-sizing:border-box;"></div>
<svg class="r" style="left:1071.5px;top:351.8px" width="14" height="14" viewBox="0 0 14 14"><circle cx="7" cy="7" r="7" fill="#1aa03a"/><path d="M5.2 4 L10.2 7 L5.2 10 Z" fill="#fff"/></svg>
<div class="t" style="left:1091px;top:349.60px;font-size:11.1px;line-height:16px;color:#555;">Hướng dẫn</div>
<svg class="r" style="left:1175px;top:351px" width="18" height="18" viewBox="0 0 18 18"><circle cx="9" cy="9" r="8" fill="none" stroke="#9a9a9a" stroke-width="1.4"/><path d="M9 4.5 L9 12.5 M5.8 9.5 L9 12.7 L12.2 9.5" fill="none" stroke="#9a9a9a" stroke-width="1.4"/></svg>
<svg class="r" style="left:1210px;top:350px" width="18" height="16" viewBox="0 0 18 16"><path d="M0.8 5 L7 5 L13 1 L13 14.3 L7 10 L0.8 10 Z M13 4.5 C15.5 5 16.6 6.3 16.6 7.6 C16.6 9 15.5 10.2 13 10.8 M3.2 10 L3.2 14.5 L6.4 14.5 L6.4 10" fill="none" stroke="#f47b2a" stroke-width="1.6" stroke-linejoin="round"/></svg>
<svg class="r" style="left:1243px;top:348.5px" width="17" height="17" viewBox="0 0 17 17"><defs><linearGradient id="cg" x1="0" y1="0" x2="0" y2="1"><stop offset="0" stop-color="#4fb0fa"/><stop offset="1" stop-color="#1d74ee"/></linearGradient></defs><rect width="17" height="17" rx="3.5" fill="url(#cg)"/><path d="M3.5 5 L5 5 L6.3 10.5 L12.5 10.5 L13.5 6.5 L5.8 6.5" fill="none" stroke="#fff" stroke-width="1.3"/><circle cx="7" cy="12.8" r="1" fill="#fff"/><circle cx="11.8" cy="12.8" r="1" fill="#fff"/></svg>
<div class="r" style="left:1252.5px;top:342.5px;width:13.5px;height:13.5px;border-radius:50%;background:#ee1d24;"></div>
<div class="t" style="left:1252.3px;top:343.00px;font-size:9px;line-height:13px;color:#fff;font-weight:700;width:14px;text-align:center;">2</div>
<svg class="r" style="left:1277px;top:349px" width="11" height="19" viewBox="0 0 11 19"><defs><linearGradient id="pg" x1="0" y1="0" x2="1" y2="1"><stop offset="0" stop-color="#3aa6b0"/><stop offset="0.45" stop-color="#d0457a"/><stop offset="0.7" stop-color="#b84a8a"/><stop offset="1" stop-color="#2fb0a0"/></linearGradient></defs><rect x="0.5" y="0.5" width="10" height="18" rx="1.5" fill="#4b5a6a"/><rect x="1.5" y="1.5" width="8" height="16" rx="1" fill="url(#pg)"/></svg>
<div class="r" style="left:1281px;top:341.5px;width:30px;height:12px;border-radius:6px;background:#ee1d24;"></div>
<div class="t" style="left:1281.0px;top:342.50px;font-size:7px;line-height:10px;color:#fff;letter-spacing:-0.3px;width:30px;text-align:center;">Yêu thích</div>
<svg class="r" style="left:1326.5px;top:350px" width="17" height="16" viewBox="0 0 17 16"><path d="M8.5 0.5 C13.2 0.5 16.5 3.6 16.5 7.6 C16.5 11.6 13.2 14.7 8.5 14.7 C7.5 14.7 6.6 14.6 5.7 14.3 L1.5 15.8 L2.6 12.4 C1.3 11.1 0.5 9.5 0.5 7.6 C0.5 3.6 3.8 0.5 8.5 0.5 Z" fill="#3d6ff0"/><circle cx="5" cy="7.6" r="1.1" fill="#fff"/><circle cx="8.5" cy="7.6" r="1.1" fill="#fff"/><circle cx="12" cy="7.6" r="1.1" fill="#fff"/></svg>
<svg class="r" style="left:1362px;top:349px" width="20" height="19" viewBox="0 0 20 19"><circle cx="8" cy="4.8" r="3.3" fill="none" stroke="#666" stroke-width="1.6"/><path d="M1.2 14.6 C1.2 11.6 4.2 9.9 8 9.9 C11.8 9.9 14.8 11.6 14.8 14.6 C14.8 16.9 12.2 17.3 8 17.3 C3.8 17.3 1.2 16.9 1.2 14.6 Z" fill="none" stroke="#666" stroke-width="1.6"/><path d="M16 2.5 L16 6.5 M14 4.5 L18 4.5" stroke="#28a745" stroke-width="1.8"/></svg>
<svg class="r" style="left:1400px;top:350px" width="16" height="16" viewBox="0 0 16 16"><path d="M8 0.8 L9.6 0.8 L10 3 L11.8 3.8 L13.6 2.5 L14.8 3.7 L13.5 5.6 L14.2 7.3 L16.3 7.8 L16.3 9.4" fill="none"/><circle cx="8" cy="8" r="2.3" fill="none" stroke="#666" stroke-width="1.6"/><path d="M6.9 1 L9.1 1 L9.5 3 L11.2 3.8 L12.9 2.6 L14.4 4.1 L13.2 5.8 L13.9 7.5 L15.7 7.9 L15.7 10.1 L13.9 10.5 L13.2 12.2 L14.4 13.9 L12.9 15.4 L11.2 14.2 L9.5 15 L9.1 16 L6.9 16 L6.5 14.9 L4.8 14.2 L3.1 15.4 L1.6 13.9 L2.8 12.2 L2.1 10.5 L0.4 10.1 L0.4 7.9 L2.1 7.5 L2.8 5.8 L1.6 4.1 L3.1 2.6 L4.8 3.8 L6.5 3 Z" fill="none" stroke="#6b6b6b" stroke-width="1.3" stroke-linejoin="round" transform="scale(0.97) translate(0.2,-0.4)"/></svg>
<svg class="r" style="left:1435px;top:349.5px" width="16" height="18" viewBox="0 0 16 18"><path d="M8 1.2 C4.9 1.2 3.2 3.6 3.2 6.8 L3.2 10.2 C3.2 11.6 1.2 12 1.2 13.3 C1.2 14.1 2 14.3 3 14.3 L13 14.3 C14 14.3 14.8 14.1 14.8 13.3 C14.8 12 12.8 11.6 12.8 10.2 L12.8 6.8 C12.8 3.6 11.1 1.2 8 1.2 Z" fill="none" stroke="#666" stroke-width="1.6"/><path d="M6.8 16.3 L9.2 16.3" stroke="#6b6b6b" stroke-width="1.6" stroke-linecap="round"/></svg>
<svg class="r" style="left:1471px;top:350px" width="17" height="17" viewBox="0 0 17 17"><circle cx="8.5" cy="8.5" r="7.6" fill="none" stroke="#666" stroke-width="1.6"/><path d="M6.2 6.5 C6.2 4.9 7.3 4.2 8.5 4.2 C9.8 4.2 10.8 5 10.8 6.3 C10.8 8 8.5 8.2 8.5 10" fill="none" stroke="#666" stroke-width="1.6"/><circle cx="8.5" cy="12.6" r="0.9" fill="#6b6b6b"/></svg>
<svg class="r" style="left:1504px;top:350px" width="17" height="17" viewBox="0 0 17 17"><circle cx="8.5" cy="8.5" r="7.6" fill="none" stroke="#666" stroke-width="1.6"/><circle cx="5.3" cy="8.5" r="0.9" fill="#6b6b6b"/><circle cx="8.5" cy="8.5" r="0.9" fill="#6b6b6b"/><circle cx="11.7" cy="8.5" r="0.9" fill="#6b6b6b"/></svg>
<svg class="r" style="left:1536px;top:348px" width="18" height="18" viewBox="0 0 18 18"><path d="M1.2 8 L1.2 15.3 L7 15.3 C8 15.3 8.4 16.3 9 16.3 C9.6 16.3 10 15.3 11 15.3 L16.8 15.3 L16.8 8" fill="none" stroke="#f5a524" stroke-width="1.6" stroke-linejoin="round"/><path d="M9 3 C7 3 5.8 4.5 5.8 6.2 C5.8 7.6 6.6 8.5 7.3 9.2 L7.3 11.3 L10.7 11.3 L10.7 9.2 C11.4 8.5 12.2 7.6 12.2 6.2 C12.2 4.5 11 3 9 3 Z" fill="none" stroke="#f5a524" stroke-width="1.6" stroke-linejoin="round"/><circle cx="2.5" cy="2.5" r="0.9" fill="#f5a524"/></svg>
<div class="r" style="left:1545px;top:341px;width:25.5px;height:12px;border-radius:6px;background:#ee1d24;"></div>
<div class="t" style="left:1544.7px;top:340.50px;font-size:9px;line-height:13px;color:#fff;font-weight:700;letter-spacing:-0.2px;width:26px;text-align:center;">New</div>
<svg class="r" style="left:1564px;top:345.5px" width="26" height="26" viewBox="0 0 26 26"><circle cx="13" cy="13" r="11" fill="#5cc15c"/><path d="M9.07 23.81 A11.5 11.5 0 1 1 18.75 3.04" fill="none" stroke="#ee2a2a" stroke-width="2.4"/><path d="M18.75 3.04 A11.5 11.5 0 0 1 9.07 23.81" fill="none" stroke="#2d7be6" stroke-width="2.4"/></svg>
<div class="t" style="left:1563.5px;top:351.30px;font-size:11px;line-height:15px;color:#e9f6e9;font-weight:700;letter-spacing:-0.4px;width:26px;text-align:center;">NN</div>
<div class="r" style="left:1577.5px;top:343px;width:13px;height:13px;border-radius:50%;background:#ee1d24;"></div>
<div class="t" style="left:1577.5px;top:343.00px;font-size:9px;line-height:13px;color:#fff;font-weight:700;width:13px;text-align:center;">2</div>
<div class="r" style="left:344px;top:379px;width:1256px;height:433px;background:#d8ecef;"></div>
<div class="r" style="left:166px;top:379px;width:178px;height:432px;background:linear-gradient(176deg,#061316 0%,#081619 48%,#1a2528 64%,#333c3f 82%,#40484b 100%);"></div>
<div class="r" style="left:336px;top:423px;width:8px;height:388px;background:#ececef;"></div>
<div class="r" style="left:337.5px;top:425px;width:5px;height:364px;background:#d8d8dd;border-radius:3px;"></div>
<div class="r" style="left:203px;top:389px;width:101px;height:22px;border:2px solid #c8c8c8;border-radius:11px;box-sizing:border-box;"></div>
<svg class="r" style="left:213px;top:396px" width="9" height="9" viewBox="0 0 9 9"><path d="M4.5 0 L4.5 9 M0 4.5 L9 4.5" stroke="#19b5b5" stroke-width="1.6"/></svg>
<div class="t" style="left:226px;top:393.00px;font-size:10.7px;line-height:15px;color:#f2f2f2;font-weight:700;">Thêm nhanh</div>
<div class="t" style="left:171px;top:433.00px;font-size:10.3px;line-height:14px;color:#f5f5f5;font-weight:700;">HAY DÙNG</div>
<svg class="r" style="left:234px;top:437px" width="7" height="4.5" viewBox="0 0 7 4.5"><path d="M0 0 L7 0 L3.5 4.5 Z" fill="#f0f0f0"/></svg>
<svg class="r" style="left:314.5px;top:432px" width="14" height="14" viewBox="0 0 14 14"><path d="M2 12 L2.8 9 L10 1.8 L12.2 4 L5 11.2 Z M8.8 3 L11 5.2" fill="none" stroke="#d5d5d5" stroke-width="1.2" stroke-linejoin="round"/></svg>
<div class="r" style="left:177px;top:458px;width:146px;height:45px;border:1px dotted #667073;box-sizing:border-box;"></div>
<div class="t" style="left:191px;top:467.00px;font-size:10.9px;line-height:15px;color:#1a9cf0;">Ghim các tính năng hay</div>
<div class="t" style="left:191px;top:481.00px;font-size:10.9px;line-height:15px;color:#1a9cf0;">dùng tại đây</div>
<div class="r" style="left:177px;top:508px;width:146px;height:28px;background:#1a2428;border-radius:4px;"></div>
<div class="t" style="left:177.0px;top:516.00px;font-size:11px;line-height:15px;color:#f0f0f0;width:146px;text-align:center;">Hay dùng trang này</div>
<div class="t" style="left:171px;top:555.50px;font-size:10.3px;line-height:14px;color:#f5f5f5;font-weight:700;">PHẦN HỆ</div>
<svg class="r" style="left:227.5px;top:559.5px" width="7" height="4.5" viewBox="0 0 7 4.5"><path d="M0 0 L7 0 L3.5 4.5 Z" fill="#f0f0f0"/></svg>
<svg class="r" style="left:314.5px;top:554.5px" width="14" height="14" viewBox="0 0 14 14"><path d="M2 12 L2.8 9 L10 1.8 L12.2 4 L5 11.2 Z M8.8 3 L11 5.2" fill="none" stroke="#d5d5d5" stroke-width="1.2" stroke-linejoin="round"/></svg>
<svg class="r" style="left:177.5px;top:587px" width="17" height="17" viewBox="0 0 17 17"><circle cx="8.5" cy="8.5" r="8" fill="#1d3ff0"/><path d="M2.6 3.6 L5.2 4.9 L11.8 4.9 L14.4 3.6 L14.4 10 C14.4 12.6 12.4 13.4 8.5 13.4 C4.6 13.4 2.6 12.6 2.6 10 Z" fill="#f4f6ff"/><rect x="4.6" y="7" width="7.8" height="5" rx="2.4" fill="#1a1f66"/><circle cx="6.8" cy="9.4" r="1.1" fill="#9bb8dc"/><circle cx="10.2" cy="9.4" r="1.1" fill="#9bb8dc"/></svg>
<div class="t" style="left:205px;top:587.50px;font-size:11px;line-height:15px;color:#f0f0f0;">Trợ lý AI</div>
<svg class="r" style="left:177.5px;top:620px" width="16" height="16" viewBox="0 0 16 16"><path d="M7 4.5 A5.5 5.5 0 1 0 12.5 10 L7 10 Z" fill="none" stroke="#cfd3d4" stroke-width="1.2"/><path d="M9.2 1.5 L9.2 7.5 L14.5 4.5 Z" fill="none" stroke="#cfd3d4" stroke-width="1.2" stroke-linejoin="round"/></svg>
<div class="t" style="left:205px;top:620.50px;font-size:11px;line-height:15px;color:#f0f0f0;">Tổng quan</div>
<svg class="r" style="left:177.5px;top:653px" width="16" height="16" viewBox="0 0 16 16"><path d="M5 1.5 L11 1.5 L9.5 5 C13 6.5 13.5 9 13.5 11 C13.5 14 11 15 8 15 C5 15 2.5 14 2.5 11 C2.5 9 3 6.5 6.5 5 Z M6 5 L10 5" fill="none" stroke="#cfd3d4" stroke-width="1.2" stroke-linejoin="round"/></svg>
<div class="t" style="left:205px;top:653.50px;font-size:11px;line-height:15px;color:#f0f0f0;">Tiền mặt</div>
<svg class="r" style="left:177.5px;top:686px" width="16" height="16" viewBox="0 0 16 16"><path d="M8 1 L8 3 M2 6 L14 6 L8 3 Z M1.5 14.5 L14.5 14.5 M2.5 12.5 L13.5 12.5 M4 7 L4 12 M6.7 7 L6.7 12 M9.3 7 L9.3 12 M12 7 L12 12" fill="none" stroke="#cfd3d4" stroke-width="1.1"/></svg>
<div class="t" style="left:205px;top:686.50px;font-size:11px;line-height:15px;color:#f0f0f0;">Tiền gửi</div>
<svg class="r" style="left:177.5px;top:719px" width="16" height="16" viewBox="0 0 16 16"><path d="M2 6 L14 6 L14.5 15 L1.5 15 Z M5 7.5 L5 4.5 A3 3 0 0 1 11 4.5 L11 7.5" fill="none" stroke="#cfd3d4" stroke-width="1.2" stroke-linejoin="round"/></svg>
<div class="t" style="left:205px;top:719.50px;font-size:11px;line-height:15px;color:#f0f0f0;">Mua hàng</div>
<div class="r" style="left:166px;top:743px;width:170px;height:34px;background:rgba(200,210,215,0.22);"></div>
<div class="r" style="left:167px;top:743px;width:2px;height:34px;background:#1e9aa6;"></div>
<svg class="r" style="left:177.5px;top:752px" width="17" height="16" viewBox="0 0 17 16"><path d="M1 1.5 L3.5 1.5 L5.5 10.5 L14.5 10.5 L16 4 L4.3 4" fill="none" stroke="#cfd3d4" stroke-width="1.3" stroke-linejoin="round"/><circle cx="6.5" cy="13.8" r="1.3" fill="#cfd3d4"/><circle cx="13" cy="13.8" r="1.3" fill="#cfd3d4"/></svg>
<div class="t" style="left:205px;top:752.50px;font-size:11px;line-height:15px;color:#f0f0f0;font-weight:700;">Bán hàng</div>
<svg class="r" style="left:177.5px;top:785px" width="16" height="17" viewBox="0 0 16 17"><path d="M3 1.5 L10 1.5 L13.5 5 L13.5 15.5 L3 15.5 Z M10 1.5 L10 5 L13.5 5 M5.5 9 L11 9 M5.5 11.5 L11 11.5" fill="none" stroke="#cfd3d4" stroke-width="1.1" stroke-linejoin="round"/></svg>
<div class="t" style="left:205px;top:785.50px;font-size:11px;line-height:15px;color:#f0f0f0;">Quản lý hóa đơn</div>
<svg class="r" style="left:363px;top:401.5px" width="8" height="10" viewBox="0 0 8 10"><path d="M6.5 1 L2 5 L6.5 9" fill="none" stroke="#2a7fd0" stroke-width="1.8"/></svg>
<div class="t" style="left:381.7px;top:397.50px;font-size:10.8px;line-height:15px;color:#1f84d0;">Đơn đặt hàng</div>
<svg class="r" style="left:514px;top:400.5px" width="18" height="11" viewBox="0 0 18 11"><path d="M0.5 1 L6.5 1 M0.5 5.5 L6.5 5.5 M0.5 10 L6.5 10 M17 5.5 L9.5 5.5 M13 2 L9.5 5.5 L13 9" fill="none" stroke="#1f84d0" stroke-width="1.7"/></svg>
<div class="r" style="left:377.5px;top:430.5px;width:172.5px;height:21px;background:#fff;border:1px solid #d2d2d2;border-radius:2px;box-sizing:border-box;"></div>
<div class="t" style="left:386px;top:435.30px;font-size:10px;line-height:14px;color:#a8a8a8;font-style:italic;">Nhập từ khóa tìm kiếm</div>
<svg class="r" style="left:527px;top:434px" width="14" height="14" viewBox="0 0 14 14"><circle cx="6" cy="6" r="4.8" fill="none" stroke="#c8c8c8" stroke-width="1.4"/><path d="M9.5 9.5 L13 13" stroke="#c8c8c8" stroke-width="1.6"/></svg>
<div class="r" style="left:360.5px;top:462.5px;width:206px;height:350px;background:#fff;"></div>
<div class="r" style="left:373.5px;top:620.5px;width:180px;height:38.5px;background:#edf5fb;"></div>
<div class="t" style="left:373.8px;top:467.00px;font-size:11.5px;line-height:16px;color:#222;font-weight:700;">ĐH00005</div>
<div class="t" style="left:373.8px;top:483.90px;font-size:10.2px;line-height:14px;color:#8a8a8a;">Nguyễn Thị Hằng</div>
<div class="r" style="left:373.5px;top:501px;width:180px;height:1px;background:#e3e8ee;"></div>
<div class="t" style="left:373.8px;top:506.50px;font-size:11.5px;line-height:16px;color:#222;font-weight:700;">ĐH00004</div>
<div class="t" style="left:373.8px;top:523.40px;font-size:10.2px;line-height:14px;color:#8a8a8a;">TEST1259</div>
<div class="r" style="left:373.5px;top:540px;width:180px;height:1px;background:#e3e8ee;"></div>
<div class="t" style="left:373.8px;top:546.00px;font-size:11.5px;line-height:16px;color:#222;font-weight:700;">ĐH00003</div>
<div class="t" style="left:373.8px;top:562.90px;font-size:10.2px;line-height:14px;color:#8a8a8a;letter-spacing:-0.45px;">CÔNG TY CỔ PHẦN THUẬN HẢI COM...</div>
<div class="r" style="left:373.5px;top:580px;width:180px;height:1px;background:#e3e8ee;"></div>
<div class="t" style="left:373.8px;top:585.50px;font-size:11.5px;line-height:16px;color:#222;font-weight:700;">ĐH00002</div>
<div class="t" style="left:373.8px;top:602.40px;font-size:10.2px;line-height:14px;color:#8a8a8a;">CTY A</div>
<div class="r" style="left:373.5px;top:620px;width:180px;height:1px;background:#e3e8ee;"></div>
<div class="t" style="left:373.8px;top:625.00px;font-size:11.5px;line-height:16px;color:#222;font-weight:700;">ĐH00001</div>
<div class="t" style="left:373.8px;top:641.90px;font-size:10.2px;line-height:14px;color:#8a8a8a;">CTY A</div>
<div class="r" style="left:373.5px;top:659px;width:180px;height:1px;background:#e3e8ee;"></div>
<div class="t" style="left:581px;top:393.00px;font-size:20.1px;line-height:26px;color:#1b1b1b;font-weight:700;">Đơn đặt hàng ĐH00001</div>
<div class="t" style="left:581.3px;top:429.70px;font-size:10.6px;line-height:15px;color:#222;font-weight:700;">Khách hàng:</div>
<div class="t" style="left:581.3px;top:445.10px;font-size:10.6px;line-height:15px;color:#222;font-weight:700;">MST:</div>
<div class="t" style="left:581.3px;top:460.80px;font-size:10.6px;line-height:15px;color:#222;font-weight:700;">Địa chỉ:</div>
<div class="t" style="left:581.3px;top:476.50px;font-size:10.6px;line-height:15px;color:#222;font-weight:700;">Diễn giải:</div>
<div class="t" style="left:663.2px;top:429.70px;font-size:10.8px;line-height:15px;color:#555;letter-spacing:-0.3px;">CTY A</div>
<div class="t" style="left:729.6px;top:429.70px;font-size:10.6px;line-height:15px;color:#222;font-weight:700;">NV bán hàng:</div>
<div class="t" style="left:729.6px;top:445.10px;font-size:10.6px;line-height:15px;color:#222;font-weight:700;">TT đơn hàng:</div>
<div class="t" style="left:828.2px;top:445.10px;font-size:10.9px;line-height:15px;color:#555;">Đang thực hiện</div>
<div class="t" style="left:729.6px;top:460.80px;font-size:10.6px;line-height:15px;color:#222;font-weight:700;">TT giao hàng:</div>
<div class="t" style="left:828.2px;top:460.80px;font-size:10.9px;line-height:15px;color:#555;">Đã giao đủ</div>
<div class="t" style="left:729.6px;top:476.50px;font-size:10.6px;line-height:15px;color:#222;font-weight:700;">TT xuất hóa đơn:</div>
<div class="t" style="left:828.2px;top:476.50px;font-size:10.9px;line-height:15px;color:#555;">Đã xuất hóa đơn</div>
<div class="r" style="left:1470.5px;top:392.5px;width:104px;height:22.5px;background:#15919c;border:2px solid #2b4a50;border-radius:12px;box-sizing:border-box;"></div>
<div class="t" style="left:1483.5px;top:396.20px;font-size:11px;line-height:15px;color:#fff;font-weight:700;">Chức năng</div>
<svg class="r" style="left:1550px;top:402.5px" width="6" height="4" viewBox="0 0 6 4"><path d="M0 0 L6 0 L3.0 4 Z" fill="#fff"/></svg>
<div class="t" style="left:1274px;top:429.50px;font-size:11px;line-height:15px;color:#333;width:300px;text-align:right;">Tổng tiền thanh toán</div>
<div class="t" style="left:1274.5px;top:447.50px;font-size:19px;line-height:24px;color:#1b1b1b;font-weight:700;width:300px;text-align:right;">100</div>
<div class="r" style="left:1458.5px;top:472px;width:115.5px;height:18px;background:#cdebd5;border-radius:9px;"></div>
<div class="t" style="left:1471.5px;top:473.50px;font-size:10.6px;line-height:15px;color:#4cae4f;">Chưa ghi doanh số</div>
<div class="t" style="left:597.5px;top:506.20px;font-size:10.92px;line-height:15px;color:#444;">Hàng hóa, dịch vụ</div>
<div class="t" style="left:718.5px;top:506.20px;font-size:10.9px;line-height:15px;color:#444;">Thực thu</div>
<div class="r" style="left:775px;top:501px;width:88px;height:27.5px;background:#f3e6b5;"></div>
<div class="t" style="left:795.5px;top:506.20px;font-size:10.76px;line-height:15px;color:#222;font-weight:700;">Bán hàng</div>
<div class="t" style="left:877.5px;top:506.20px;font-size:11px;line-height:15px;color:#444;">Ghi nhận doanh số</div>
<div class="r" style="left:580.5px;top:527.3px;width:993.7px;height:2px;background:#4ab6c2;"></div>
<div class="r" style="left:580.5px;top:541.6px;width:993.7px;height:270px;background:#fff;"></div>
<div class="r" style="left:580.5px;top:541.6px;width:993.7px;height:22.4px;background:#a7dfe4;"></div>
<div class="r" style="left:580.5px;top:563px;width:993.7px;height:1.5px;background:#3ab0be;"></div>
<div class="r" style="left:613px;top:541.6px;width:1px;height:20.7px;background:#93cdd3;"></div>
<div class="r" style="left:613px;top:564.3px;width:1px;height:23.5px;background:#dcebee;"></div>
<div class="r" style="left:761px;top:541.6px;width:1px;height:20.7px;background:#93cdd3;"></div>
<div class="r" style="left:761px;top:564.3px;width:1px;height:23.5px;background:#dcebee;"></div>
<div class="r" style="left:877px;top:541.6px;width:1px;height:20.7px;background:#93cdd3;"></div>
<div class="r" style="left:877px;top:564.3px;width:1px;height:23.5px;background:#dcebee;"></div>
<div class="r" style="left:984px;top:541.6px;width:1px;height:20.7px;background:#93cdd3;"></div>
<div class="r" style="left:984px;top:564.3px;width:1px;height:23.5px;background:#dcebee;"></div>
<div class="r" style="left:1083px;top:541.6px;width:1px;height:20.7px;background:#93cdd3;"></div>
<div class="r" style="left:1083px;top:564.3px;width:1px;height:23.5px;background:#dcebee;"></div>
<div class="r" style="left:1408px;top:541.6px;width:1px;height:20.7px;background:#93cdd3;"></div>
<div class="r" style="left:1408px;top:564.3px;width:1px;height:23.5px;background:#dcebee;"></div>
<div class="r" style="left:580.5px;top:587.5px;width:993.7px;height:1.5px;background:#d4d7db;"></div>
<div class="r" style="left:580.5px;top:589px;width:993.7px;height:19.4px;background:#e6e8ec;"></div>
<div class="t" style="left:594.3px;top:546.50px;font-size:10px;line-height:14px;color:#222;font-weight:700;">#</div>
<div class="t" style="left:612.9px;top:546.50px;font-size:10.2px;line-height:14px;color:#222;font-weight:700;width:140px;text-align:center;">Ngày hạch toán</div>
<div class="t" style="left:771px;top:546.50px;font-size:10px;line-height:14px;color:#222;font-weight:700;">Ngày chứng từ</div>
<div class="t" style="left:886.3px;top:546.50px;font-size:10px;line-height:14px;color:#222;font-weight:700;">Số chứng từ</div>
<div class="t" style="left:993.6px;top:546.50px;font-size:10px;line-height:14px;color:#222;font-weight:700;">Số hóa đơn</div>
<div class="t" style="left:1093.2px;top:546.50px;font-size:10px;line-height:14px;color:#222;font-weight:700;">Diễn giải</div>
<div class="t" style="left:1256.4px;top:546.50px;font-size:10px;line-height:14px;color:#222;font-weight:700;width:300px;text-align:right;">Số tiền</div>
<div class="t" style="left:594.7px;top:570.30px;font-size:11px;line-height:15px;color:#333;">1</div>
<div class="t" style="left:617.9px;top:570.30px;font-size:11px;line-height:15px;color:#333;width:140px;text-align:center;">13/01/2026</div>
<div class="t" style="left:771px;top:570.30px;font-size:11px;line-height:15px;color:#333;">13/01/2026</div>
<div class="t" style="left:886.3px;top:570.30px;font-size:10.6px;line-height:15px;color:#1f84d0;">BH00102</div>
<div class="t" style="left:993.6px;top:570.30px;font-size:11px;line-height:15px;color:#333;">2656</div>
<div class="t" style="left:1093.2px;top:570.30px;font-size:10.6px;line-height:15px;color:#333;">Bán hàng CÔNG TY CỔ PHẦN MISA theo hóa đơn số 2656</div>
<div class="t" style="left:1266px;top:570.30px;font-size:11px;line-height:15px;color:#333;width:300px;text-align:right;">110</div>
<div class="t" style="left:638.0px;top:593.00px;font-size:10.3px;line-height:14px;color:#333;font-weight:700;width:100px;text-align:center;">Tổng</div>
<div class="t" style="left:1266px;top:593.00px;font-size:10.3px;line-height:14px;color:#222;font-weight:700;width:300px;text-align:right;">110</div>
<div class="t" style="left:597.9px;top:619.4px;font-size:11px;line-height:15px;color:#444;">Tổng số: <b style="color:#222">1</b> bản ghi</div>
<div class="r" style="left:1301px;top:615.7px;width:164.5px;height:21px;border:1px solid #d4d4d4;border-radius:2px;box-sizing:border-box;"></div>
<div class="t" style="left:1310px;top:618.50px;font-size:11.5px;line-height:16px;color:#333;">20 bản ghi trên 1 trang</div>
<svg class="r" style="left:1450px;top:624.5px" width="7" height="4" viewBox="0 0 7 4"><path d="M0 0 L7 0 L3.5 4 Z" fill="#333"/></svg>
<div class="t" style="left:1478.8px;top:619.00px;font-size:11px;line-height:15px;color:#b5b5b5;">Trước</div>
<div class="r" style="left:1517.6px;top:618px;width:17.5px;height:17px;border:1px solid #e3e3e3;box-sizing:border-box;"></div>
<div class="t" style="left:1517.8px;top:619.00px;font-size:11px;line-height:15px;color:#222;font-weight:700;width:17px;text-align:center;">1</div>
<div class="t" style="left:1546.7px;top:619.00px;font-size:11px;line-height:15px;color:#b5b5b5;">Sau</div>
<div class="r" style="left:1589.3px;top:650.2px;width:10px;height:53.5px;background:#2a7de1;border-radius:4px 0 0 4px;"></div>
<svg class="r" style="left:1593px;top:672px" width="6" height="9" viewBox="0 0 6 9"><path d="M5 1 L1.5 4.5 L5 8" fill="none" stroke="#fff" stroke-width="1.6"/></svg>
<div class="r" style="left:166px;top:337px;width:1434px;height:475px;border:1px solid #2f2f2f;box-sizing:border-box;"></div>
</div>
<div class="r" style="left:25px;top:402.5px;width:79px;height:34.0px;border:2px solid #ee3535;box-sizing:border-box;box-shadow:0 1px 2px rgba(0,0,0,0.25);"></div>
<div class="r" style="left:104px;top:379.5px;width:30px;height:30px;background:#f03b3b;border-radius:50%;box-shadow:0 1px 3px rgba(0,0,0,0.35);"></div>
<div class="t" style="left:104.0px;top:379.50px;font-size:21px;line-height:30px;color:#fff;width:30px;text-align:center;">1</div>
<div class="r" style="left:407.5px;top:42.3px;width:109.70000000000005px;height:29.900000000000006px;border:2px solid #ee3535;box-sizing:border-box;box-shadow:0 1px 2px rgba(0,0,0,0.25);"></div>
<div class="r" style="left:515.1px;top:22.4px;width:30px;height:30px;background:#f03b3b;border-radius:50%;box-shadow:0 1px 3px rgba(0,0,0,0.35);"></div>
<div class="t" style="left:515.1px;top:22.40px;font-size:21px;line-height:30px;color:#fff;width:30px;text-align:center;">2</div>
<div class="r" style="left:1235px;top:258.2px;width:158.5px;height:24.600000000000023px;border:2px solid #ee3535;box-sizing:border-box;box-shadow:0 1px 2px rgba(0,0,0,0.25);"></div>
<div class="r" style="left:1211.2px;top:228.7px;width:30px;height:30px;background:#f03b3b;border-radius:50%;box-shadow:0 1px 3px rgba(0,0,0,0.35);"></div>
<div class="t" style="left:1211.2px;top:228.70px;font-size:21px;line-height:30px;color:#fff;width:30px;text-align:center;">3</div>
<div class="r" style="left:775px;top:501px;width:88.5px;height:28px;border:2px solid #ee3535;box-sizing:border-box;box-shadow:0 1px 2px rgba(0,0,0,0.25);"></div>
<div class="r" style="left:857px;top:473.2px;width:30px;height:30px;background:#f03b3b;border-radius:50%;box-shadow:0 1px 3px rgba(0,0,0,0.35);"></div>
<div class="t" style="left:857.0px;top:473.20px;font-size:21px;line-height:30px;color:#fff;width:30px;text-align:center;">4</div>
</body></html>
